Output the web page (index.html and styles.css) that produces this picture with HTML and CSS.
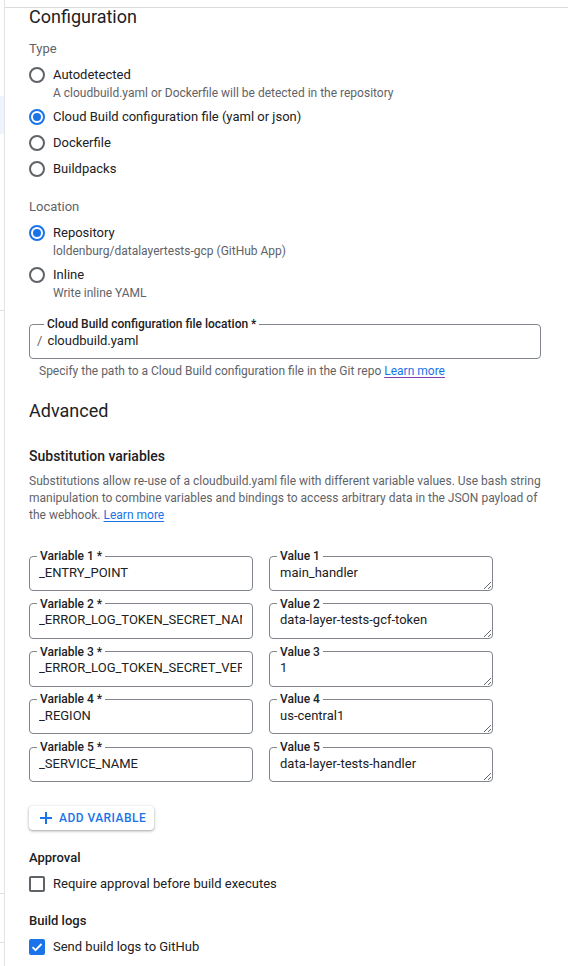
FILE: index.html
```html
<!DOCTYPE html>
<html lang="en">
<head>
<meta charset="utf-8">
<title>Configuration</title>
<link rel="stylesheet" href="styles.css">
</head>
<body>
<div class="page">
  <div class="rail">
    <div class="rail-active"></div>
    <div class="rail-tick tick-1"></div>
    <div class="rail-tick tick-2"></div>
    <div class="rail-tick tick-3"></div>
  </div>
  <main class="main">
    <h1 class="title">Configuration</h1>

    <div class="group-label">Type</div>
    <div class="options">
      <div class="option">
        <span class="radio"></span>
        <div class="option-text">
          <div class="primary">Autodetected</div>
          <div class="secondary">A cloudbuild.yaml or Dockerfile will be detected in the repository</div>
        </div>
      </div>
      <div class="option">
        <span class="radio checked"></span>
        <div class="option-text"><div class="primary">Cloud Build configuration file (yaml or json)</div></div>
      </div>
      <div class="option">
        <span class="radio"></span>
        <div class="option-text"><div class="primary">Dockerfile</div></div>
      </div>
      <div class="option">
        <span class="radio"></span>
        <div class="option-text"><div class="primary">Buildpacks</div></div>
      </div>
    </div>

    <div class="group-label loc">Location</div>
    <div class="options">
      <div class="option">
        <span class="radio checked"></span>
        <div class="option-text">
          <div class="primary">Repository</div>
          <div class="secondary">loldenburg/datalayertests-gcp (GitHub App)</div>
        </div>
      </div>
      <div class="option">
        <span class="radio"></span>
        <div class="option-text">
          <div class="primary">Inline</div>
          <div class="secondary">Write inline YAML</div>
        </div>
      </div>
    </div>

    <fieldset class="field config-field">
      <legend class="field-label config-label">Cloud Build configuration file location *</legend>
      <div class="field-value"><span class="prefix">/</span>cloudbuild.yaml</div>
    </fieldset>
    <div class="hint">Specify the path to a Cloud Build configuration file in the Git repo <a class="link visited" href="#">Learn more</a></div>

    <h2 class="section-title">Advanced</h2>

    <h3 class="sub-title">Substitution variables</h3>
    <p class="desc">Substitutions allow re-use of a cloudbuild.yaml file with different variable values. Use bash string manipulation to combine variables and bindings to access arbitrary data in the JSON payload of the webhook. <a class="link" href="#">Learn more</a></p>

    <div class="vars">
      <fieldset class="field"><legend class="field-label">Variable 1 *</legend><div class="field-value">_ENTRY_POINT</div></fieldset>
      <fieldset class="field"><legend class="field-label">Value 1</legend><textarea class="field-area" rows="1" readonly>main_handler</textarea></fieldset>

      <fieldset class="field"><legend class="field-label">Variable 2 *</legend><div class="field-value">_ERROR_LOG_TOKEN_SECRET_NAME</div></fieldset>
      <fieldset class="field"><legend class="field-label">Value 2</legend><textarea class="field-area" rows="1" readonly>data-layer-tests-gcf-token</textarea></fieldset>

      <fieldset class="field"><legend class="field-label">Variable 3 *</legend><div class="field-value">_ERROR_LOG_TOKEN_SECRET_VERSION</div></fieldset>
      <fieldset class="field"><legend class="field-label">Value 3</legend><textarea class="field-area" rows="1" readonly>1</textarea></fieldset>

      <fieldset class="field"><legend class="field-label">Variable 4 *</legend><div class="field-value">_REGION</div></fieldset>
      <fieldset class="field"><legend class="field-label">Value 4</legend><textarea class="field-area" rows="1" readonly>us-central1</textarea></fieldset>

      <fieldset class="field"><legend class="field-label">Variable 5 *</legend><div class="field-value">_SERVICE_NAME</div></fieldset>
      <fieldset class="field"><legend class="field-label">Value 5</legend><textarea class="field-area" rows="1" readonly>data-layer-tests-handler</textarea></fieldset>
    </div>

    <button class="add-btn" type="button">
      <svg class="plus" width="12" height="12" viewBox="0 0 12 12" aria-hidden="true"><path d="M6 0v12M0 6h12" stroke="currentColor" stroke-width="2" fill="none"/></svg>
      <span>ADD VARIABLE</span>
    </button>

    <h4 class="small-title approval">Approval</h4>
    <div class="check-row">
      <span class="checkbox"></span>
      <span class="primary">Require approval before build executes</span>
    </div>

    <h4 class="small-title logs">Build logs</h4>
    <div class="check-row">
      <span class="checkbox checked">
        <svg width="16" height="16" viewBox="0 0 16 16" aria-hidden="true"><path d="M3.5 8.2l3 3 6-6.2" stroke="#fff" stroke-width="1.8" fill="none"/></svg>
      </span>
      <span class="primary">Send build logs to GitHub</span>
    </div>
  </main>
</div>
</body>
</html>
```
FILE: styles.css
```css
* { box-sizing: border-box; }

body {
  margin: 0;
  font-family: Roboto, "Noto Sans", Arial, sans-serif;
  color: #202124;
  background: #fff;
}

.page {
  display: flex;
  min-height: 966px;
}

.rail {
  width: 5px;
  flex: none;
  border-right: 1px solid #e3e3e3;
  display: flex;
  flex-direction: column;
}
.rail-active {
  margin-top: 96px;
  height: 38px;
  background: #eef3fd;
}
.rail-tick { height: 1px; background: #e0e0e0; }
.tick-1 { margin-top: 176px; }
.tick-2 { margin-top: 582px; }
.tick-3 { margin-top: 48px; }

.main {
  flex: 1;
  margin-top: 7px;
  border-top: 1px solid #dadce0;
  padding: 0 27px 0 24px;
}

.title {
  margin: 0;
  font-size: 18px;
  line-height: 18px;
  font-weight: 400;
}

.group-label {
  margin-top: 13px;
  font-size: 13px;
  line-height: 20px;
  color: #5f6368;
}
.group-label.loc { margin-top: 15px; }

.options { margin-top: 3px; }

.option {
  display: flex;
  align-items: flex-start;
  gap: 8px;
  padding: 3px 0;
}

.radio {
  flex: none;
  width: 16px;
  height: 16px;
  margin-top: 2px;
  border: 2px solid #5f6368;
  border-radius: 50%;
  display: flex;
  align-items: center;
  justify-content: center;
}
.radio.checked { border-color: #1a73e8; }
.radio.checked::after {
  content: "";
  width: 8px;
  height: 8px;
  border-radius: 50%;
  background: #1a73e8;
}

.primary {
  font-size: 13px;
  line-height: 20px;
  color: #202124;
}
.secondary {
  font-size: 12px;
  line-height: 16px;
  color: #5f6368;
}

.field {
  margin: 0;
  padding: 0;
  border: 1px solid #80868b;
  border-radius: 4px;
  min-width: 0;
}
.field-label {
  margin-left: 7px;
  padding: 0 3px;
  font-size: 12px;
  line-height: 14px;
  font-weight: 500;
  color: #202124;
}
.field-value {
  height: 27px;
  margin: 0 10px 0 9px;
  padding: 1.5px 0 0;
  font-size: 13px;
  line-height: 16px;
  white-space: nowrap;
  overflow: hidden;
}
.field-area {
  display: block;
  width: 100%;
  height: 27px;
  margin: 0;
  border: 0;
  padding: 1.5px 10px 0 10px;
  font-family: Roboto, "Noto Sans", Arial, sans-serif;
  font-size: 13px;
  line-height: 16px;
  color: #202124;
  background: transparent;
  resize: vertical;
  overflow: hidden;
  outline: none;
}

.config-field { margin-top: 13px; }
.config-label { margin-left: 14px; }
.config-field .field-value { margin-left: 7px; }
.prefix {
  color: #5f6368;
  margin-right: 5px;
}

.hint {
  margin-top: 4px;
  padding-left: 10px;
  font-size: 12px;
  line-height: 16px;
  color: #5f6368;
}

.link {
  color: #1a73e8;
  text-decoration: underline;
  text-decoration-color: #1a73e8;
  text-underline-offset: 2px;
}
.link.visited { text-decoration-color: #7b3fb0; }

.section-title {
  margin: 20px 0 0;
  font-size: 18px;
  line-height: 24px;
  font-weight: 400;
}

.sub-title {
  margin: 23px 0 0;
  font-size: 14px;
  line-height: 20px;
  font-weight: 500;
}

.desc {
  margin: 6.5px 0 0;
  font-size: 12px;
  line-height: 17px;
  color: #5f6368;
}

.vars {
  margin-top: 25.5px;
  display: grid;
  grid-template-columns: 224px 224px;
  column-gap: 16px;
  row-gap: 5.75px;
}

.add-btn {
  margin-top: 24px;
  height: 24px;
  display: flex;
  align-items: center;
  gap: 7px;
  padding: 0 8px 0 11px;
  border: 0;
  border-radius: 4px;
  background: #fff;
  box-shadow: 0 1px 2px rgba(60, 64, 67, 0.3), 0 1px 3px 1px rgba(60, 64, 67, 0.15);
  color: #1a73e8;
  font-family: Roboto, "Noto Sans", Arial, sans-serif;
  font-size: 12px;
  font-weight: 500;
  letter-spacing: 0.45px;
}
.plus { flex: none; }

.small-title {
  margin: 0;
  font-size: 13px;
  line-height: 20px;
  font-weight: 500;
}
.approval { margin-top: 18px; }
.logs { margin-top: 14px; }

.check-row {
  margin-top: 3px;
  display: flex;
  align-items: flex-start;
  gap: 8px;
  padding: 3px 0;
}

.checkbox {
  flex: none;
  width: 16px;
  height: 16px;
  margin-top: 2px;
  border: 2px solid #5f6368;
  border-radius: 2px;
  display: flex;
}
.checkbox.checked {
  border: 0;
  background: #1a73e8;
}
```
